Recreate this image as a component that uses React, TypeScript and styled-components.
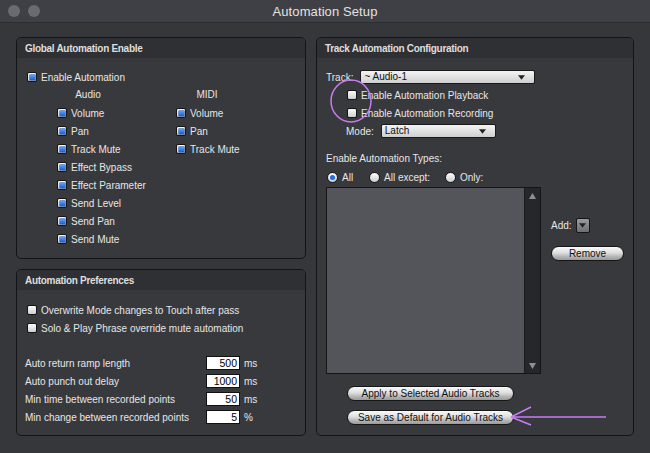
import styled, { createGlobalStyle } from 'styled-components';

const GlobalStyle = createGlobalStyle`
  html, body { margin: 0; padding: 0; background: #36373b; }
  body {
    font-family: "Liberation Sans", Arial, sans-serif;
    font-size: 10px;
    color: #e6e6e6;
  }
`;

const AUDIO_PARAMS = [
  'Volume',
  'Pan',
  'Track Mute',
  'Effect Bypass',
  'Effect Parameter',
  'Send Level',
  'Send Pan',
  'Send Mute',
];
const MIDI_PARAMS = ['Volume', 'Pan', 'Track Mute'];

const TIMING_FIELDS = [
  { label: 'Auto return ramp length', value: '500', unit: 'ms' },
  { label: 'Auto punch out delay', value: '1000', unit: 'ms' },
  { label: 'Min time between recorded points', value: '50', unit: 'ms' },
  { label: 'Min change between recorded points', value: '5', unit: '%' },
];

const Check = ({ on }: { on?: boolean }) => (
  <Box>{on && <Tick />}</Box>
);

const Radio = ({ on }: { on?: boolean }) => (
  <Round>{on && <Dot />}</Round>
);

const Select = ({ value, width }: { value: string; width: number }) => (
  <SelectBox $w={width}>
    <span>{value}</span>
    <Caret viewBox="0 0 8 5">
      <path d="M0 0h8L4 5z" />
    </Caret>
  </SelectBox>
);

export default function App() {
  return (
    <>
      <GlobalStyle />
      <Window>
        <TitleBar>
          <Lights>
            <Light />
            <Light />
          </Lights>
          <Title>Automation Setup</Title>
        </TitleBar>

        <Content>
          <LeftColumn>
            <Panel>
              <PanelHead>Global Automation Enable</PanelHead>
              <PanelBody $pad="10px 10px 10px">
                <Row>
                  <Check on />
                  <span>Enable Automation</span>
                </Row>
                <Columns>
                  <Column>
                    <ColHead>Audio</ColHead>
                    {AUDIO_PARAMS.map((p) => (
                      <Row key={p}>
                        <Check on />
                        <span>{p}</span>
                      </Row>
                    ))}
                  </Column>
                  <Column>
                    <ColHead>MIDI</ColHead>
                    {MIDI_PARAMS.map((p) => (
                      <Row key={p}>
                        <Check on />
                        <span>{p}</span>
                      </Row>
                    ))}
                  </Column>
                </Columns>
              </PanelBody>
            </Panel>

            <Panel>
              <PanelHead>Automation Preferences</PanelHead>
              <PanelBody $pad="11px 10px 9px">
                <Row>
                  <Check />
                  <span>Overwrite Mode changes to Touch after pass</span>
                </Row>
                <Row>
                  <Check />
                  <span>Solo &amp; Play Phrase override mute automation</span>
                </Row>
                <Fields>
                  {TIMING_FIELDS.map((f) => (
                    <FieldRow key={f.label}>
                      <FieldLabel>{f.label}</FieldLabel>
                      <NumInput>{f.value}</NumInput>
                      <Unit>{f.unit}</Unit>
                    </FieldRow>
                  ))}
                </Fields>
              </PanelBody>
            </Panel>
          </LeftColumn>

          <Panel $grow>
            <PanelHead>Track Automation Configuration</PanelHead>
            <PanelBody $pad="10px 9px 10px">
              <Row>
                <span>Track:</span>
                <Select value="~ Audio-1" width={175} />
              </Row>
              <Row $indent={21}>
                <Check />
                <span>Enable Automation Playback</span>
              </Row>
              <Row $indent={21}>
                <Check />
                <span>Enable Automation Recording</span>
              </Row>
              <Row $indent={20}>
                <span>Mode:</span>
                <Select value="Latch" width={115} />
              </Row>

              <TypesLabel>Enable Automation Types:</TypesLabel>
              <RadioRow>
                <RadioItem $w={42}>
                  <Radio on />
                  <span>All</span>
                </RadioItem>
                <RadioItem $w={76}>
                  <Radio />
                  <span>All except:</span>
                </RadioItem>
                <RadioItem>
                  <Radio />
                  <span>Only:</span>
                </RadioItem>
              </RadioRow>

              <ListArea>
                <ListBox>
                  <ListInner />
                  <ScrollTrack>
                    <Arrow viewBox="0 0 7 6">
                      <path d="M3.5 0L7 6H0z" />
                    </Arrow>
                    <Arrow viewBox="0 0 7 6">
                      <path d="M0 0h7L3.5 6z" />
                    </Arrow>
                  </ScrollTrack>
                </ListBox>
                <SideControls>
                  <AddRow>
                    <span>Add:</span>
                    <AddButton>
                      <Caret viewBox="0 0 8 5">
                        <path d="M0 0h8L4 5z" />
                      </Caret>
                    </AddButton>
                  </AddRow>
                  <Pill $w={73}>Remove</Pill>
                </SideControls>
              </ListArea>

              <Actions>
                <Pill $w={167}>Apply to Selected Audio Tracks</Pill>
                <Pill $w={167}>Save as Default for Audio Tracks</Pill>
              </Actions>
            </PanelBody>
          </Panel>
        </Content>

        {/* annotation marks drawn over the screenshot */}
        <Marks viewBox="0 0 650 453">
          <ellipse cx="351" cy="101" rx="20" ry="21" />
          <path d="M606 417H511M511 417L531 407M511 417L531 425" />
        </Marks>
      </Window>
    </>
  );
}

const Window = styled.div`
  position: relative;
  width: 650px;
  height: 453px;
  background: #36373b;
  display: flex;
  flex-direction: column;
  overflow: hidden;
`;

const TitleBar = styled.div`
  height: 22px;
  flex-shrink: 0;
  background: #3e4046;
  border-bottom: 1px solid #2c2d31;
  display: flex;
  align-items: center;
  justify-content: center;
  position: relative;
`;

const Lights = styled.div`
  position: absolute;
  left: 8px;
  top: 5px;
  display: flex;
  gap: 8px;
`;

const Light = styled.div`
  width: 12px;
  height: 12px;
  border-radius: 50%;
  background: #6a6b70;
`;

const Title = styled.div`
  font-size: 13px;
  color: #e2e2e2;
  letter-spacing: 0.1px;
`;

const Content = styled.div`
  flex: 1;
  display: flex;
  gap: 10px;
  padding: 14px 16px 0 16px;
`;

const LeftColumn = styled.div`
  width: 290px;
  display: flex;
  flex-direction: column;
  gap: 10px;
`;

const Panel = styled.div<{ $grow?: boolean }>`
  border: 1px solid #141416;
  border-radius: 5px;
  background: #38393d;
  overflow: hidden;
  display: flex;
  flex-direction: column;
  ${({ $grow }) => ($grow ? 'width: 320px; height: 399px; box-sizing: border-box;' : '')}
`;

const PanelHead = styled.div`
  height: 20px;
  line-height: 21px;
  padding-left: 8px;
  background: #2f3034;
  font-weight: bold;
  font-size: 10px;
  letter-spacing: -0.3px;
  color: #dedede;
`;

const PanelBody = styled.div<{ $pad: string }>`
  padding: ${({ $pad }) => $pad};
  display: flex;
  flex-direction: column;
`;

const Row = styled.div<{ $indent?: number }>`
  height: 18px;
  display: flex;
  align-items: center;
  gap: 4px;
  padding-left: ${({ $indent }) => $indent ?? 0}px;
  white-space: nowrap;
`;

const Columns = styled.div`
  display: flex;
  padding-left: 30px;
`;

const Column = styled.div`
  width: 120px;
  display: flex;
  flex-direction: column;
`;

const ColHead = styled.div`
  height: 18px;
  line-height: 18px;
  width: 62px;
  text-align: center;
`;

const Box = styled.div`
  width: 8px;
  height: 8px;
  flex-shrink: 0;
  border: 1px solid #151515;
  border-radius: 2px;
  background: linear-gradient(#fbfbfb, #cfcfcf);
  display: flex;
  align-items: center;
  justify-content: center;
`;

const Tick = styled.div`
  width: 5px;
  height: 5px;
  background: linear-gradient(#5aa0ff, #1560d8);
  box-shadow: 0 0 0 0.5px #0b3f9c;
`;

const Round = styled.div`
  width: 9px;
  height: 9px;
  flex-shrink: 0;
  border: 1px solid #1a1a1a;
  border-radius: 50%;
  background: linear-gradient(#fdfdfd, #cdcdcd);
  display: flex;
  align-items: center;
  justify-content: center;
`;

const Dot = styled.div`
  width: 5px;
  height: 5px;
  border-radius: 50%;
  background: #1d6fe8;
`;

const Fields = styled.div`
  margin-top: 17px;
  display: flex;
  flex-direction: column;
  margin-left: -2px;
`;

const FieldRow = styled.div`
  height: 18px;
  display: flex;
  align-items: center;
`;

const FieldLabel = styled.div`
  width: 181px;
  white-space: nowrap;
`;

const NumInput = styled.div`
  width: 30px;
  height: 12px;
  line-height: 12px;
  padding-right: 2px;
  background: #fff;
  border: 1px solid #111;
  color: #000;
  text-align: right;
  font-size: 10.5px;
`;

const Unit = styled.span`
  margin-left: 4px;
`;

const SelectBox = styled.div<{ $w: number }>`
  width: ${({ $w }) => $w}px;
  height: 14px;
  box-sizing: border-box;
  margin-left: 3px;
  padding: 0 9px 0 3px;
  border: 1px solid #1a1a1a;
  border-radius: 2px;
  background: linear-gradient(#f4f4f4, #cfcfcf);
  color: #111;
  display: flex;
  align-items: center;
  justify-content: space-between;
  font-size: 10px;
  line-height: 12px;
`;

const Caret = styled.svg`
  width: 7px;
  height: 5px;
  fill: #222;
`;

const TypesLabel = styled.div`
  margin-top: 10px;
  height: 18px;
  line-height: 18px;
`;

const RadioRow = styled.div`
  height: 18px;
  display: flex;
  align-items: center;
  padding-left: 1px;
`;

const RadioItem = styled.div<{ $w?: number }>`
  display: flex;
  align-items: center;
  gap: 4px;
  ${({ $w }) => ($w ? `width: ${$w}px;` : '')}
`;

const ListArea = styled.div`
  margin-top: 1px;
  display: flex;
  gap: 10px;
`;

const ListBox = styled.div`
  width: 215px;
  height: 187px;
  box-sizing: border-box;
  border: 1px solid #151517;
  display: flex;
`;

const ListInner = styled.div`
  flex: 1;
  background: #54555a;
`;

const ScrollTrack = styled.div`
  width: 15px;
  background: #26272b;
  border-left: 1px solid #1a1a1c;
  display: flex;
  flex-direction: column;
  justify-content: space-between;
  align-items: center;
  padding: 5px 0 4px;
`;

const Arrow = styled.svg`
  width: 7px;
  height: 6px;
  fill: #8e8f94;
`;

const SideControls = styled.div`
  padding-top: 31px;
  display: flex;
  flex-direction: column;
  gap: 13px;
`;

const AddRow = styled.div`
  height: 15px;
  display: flex;
  align-items: center;
  gap: 4px;
`;

const AddButton = styled.div`
  width: 12px;
  height: 13px;
  border: 1px solid #151515;
  border-radius: 2px;
  background: linear-gradient(#9a9ba0, #6e6f74);
  display: flex;
  align-items: center;
  justify-content: center;
`;

const Pill = styled.div<{ $w: number }>`
  width: ${({ $w }) => $w}px;
  height: 15px;
  box-sizing: border-box;
  border: 1px solid #161616;
  border-radius: 8px;
  background: linear-gradient(#fafafa 0%, #dedede 45%, #b4b4b4 75%, #9a9a9a 100%);
  color: #111;
  font-size: 10px;
  display: flex;
  align-items: center;
  justify-content: center;
  white-space: nowrap;
`;

const Actions = styled.div`
  margin-top: 12px;
  padding-left: 21px;
  display: flex;
  flex-direction: column;
  gap: 9px;
`;

const Marks = styled.svg`
  position: absolute;
  inset: 0;
  width: 650px;
  height: 453px;
  pointer-events: none;
  fill: none;
  stroke: #c77cf2;
  stroke-width: 1.5;
`;
